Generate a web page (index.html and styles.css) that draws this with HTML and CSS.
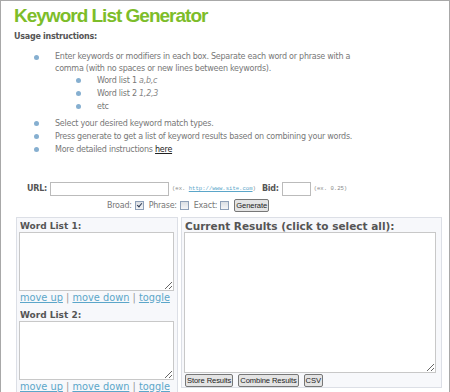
FILE: index.html
```html
<!DOCTYPE html>
<html lang="en">
<head>
    <meta charset="UTF-8">
    <title>Keyword List Generator</title>
    <link rel="stylesheet" href="styles.css">
</head>
<body>
<div class="page">
    <h1>Keyword List Generator</h1>
    <p class="usage">Usage instructions:</p>
    <ul class="steps">
        <li class="first">Enter keywords or modifiers in each box. Separate each word or phrase with a comma (with no spaces or new lines between keywords).
            <ul class="sub">
                <li>Word list 1 <i>a,b,c</i></li>
                <li>Word list 2 <i>1,2,3</i></li>
                <li>etc</li>
            </ul>
        </li>
        <li>Select your desired keyword match types.</li>
        <li>Press generate to get a list of keyword results based on combining your words.</li>
        <li>More detailed instructions <a href="#" class="dark">here</a></li>
    </ul>

    <form class="opts">
        <div class="row">
            <b>URL:</b> <input type="text" class="url">
            <span class="ex">(ex. <a href="#">http://www.site.com</a>)</span>
            <b class="bid-lbl">Bid:</b> <input type="text" class="bid">
            <span class="ex">(ex. 0.25)</span>
        </div>
        <div class="row row2">
            Broad: <input type="checkbox" class="cb" checked>
            Phrase: <input type="checkbox" class="cb">
            Exact: <input type="checkbox" class="cb">
            <button type="button" class="btn">Generate</button>
        </div>
    </form>

    <div class="panels">
        <div class="panel lists">
            <h3>Word List 1:</h3>
            <textarea class="words"></textarea>
            <div class="links"><a href="#">move up</a> | <a href="#">move down</a> | <a href="#">toggle</a></div>
            <h3>Word List 2:</h3>
            <textarea class="words"></textarea>
            <div class="links"><a href="#">move up</a> | <a href="#">move down</a> | <a href="#">toggle</a></div>
        </div>
        <div class="panel results">
            <h3 class="big">Current Results (click to select all):</h3>
            <textarea class="out"></textarea>
            <div class="btns">
                <button type="button" class="btn">Store Results</button>
                <button type="button" class="btn">Combine Results</button>
                <button type="button" class="btn">CSV</button>
            </div>
        </div>
    </div>
</div>
</body>
</html>
```

FILE: styles.css
```css
html, body {
    margin: 0;
    height: 100%;
    overflow: hidden;
    background-color: #fff;
}
.page {
    box-sizing: border-box;
    height: 100%;
    border: 1px solid #a8a8a8;
    border-bottom: none;
    padding: 0 0 0 13px;
    font-family: "DejaVu Sans", Verdana, sans-serif;
    font-size: 8px;
    letter-spacing: -0.25px;
    color: #777;
}
h1 {
    margin: 0;
    padding-top: 3px;
    font-family: "Liberation Sans", Arial, sans-serif;
    font-size: 19px;
    letter-spacing: -1px;
    line-height: 24px;
    color: #7dbd2a;
}
.usage {
    margin: 3px 0 0;
    font-weight: bold;
    color: #555;
    line-height: 12px;
}
.steps {
    list-style: none;
    margin: 8px 0 0;
    padding: 0 0 0 41px;
    width: 305px;
}
.steps li {
    position: relative;
    line-height: 13px;
}
.steps li.first {
    line-height: 12px;
}
.steps li::before {
    content: "";
    position: absolute;
    left: -21px;
    top: 4px;
    width: 5px;
    height: 5px;
    border-radius: 50%;
    background-color: #86afd0;
}
.sub {
    list-style: none;
    margin: -1.5px 0 4px;
    padding: 0 0 0 42px;
}
.steps .sub li {
    line-height: 13px;
}
.sub i {
    color: #888;
}
a {
    color: #5ba6c9;
}
a.dark {
    color: #222;
}
.opts {
    margin: 25px 0 0;
}
.row {
    display: flex;
    align-items: center;
    height: 16px;
    padding-left: 13px;
}
.row b {
    color: #555;
    margin-right: 3px;
}
.url {
    width: 115px;
    height: 10px;
    border: 1px solid #bbb;
    margin: 0 3px 0 0;
    padding: 1px;
}
.bid {
    width: 25px;
    height: 10px;
    border: 1px solid #bbb;
    margin: 0 3px 0 0;
    padding: 1px;
}
.bid-lbl {
    margin-left: 6px;
}
.ex {
    font-family: "Liberation Mono", "Courier New", monospace;
    font-size: 5.6px;
    letter-spacing: 0;
    color: #888;
}
.row2 {
    padding-left: 93px;
    margin-top: 1px;
}
.cb {
    appearance: none;
    -webkit-appearance: none;
    position: relative;
    box-sizing: border-box;
    width: 9px;
    height: 9px;
    margin: 0 5px 0 3px;
    border: 1px solid #8fa0b8;
    background: linear-gradient(#dcdfe4, #f4f5f7);
}
.cb:checked::after {
    content: "";
    position: absolute;
    left: 2px;
    top: 0;
    width: 2px;
    height: 4px;
    border: solid #2c3a55;
    border-width: 0 1px 1px 0;
    transform: rotate(40deg);
}
.btn {
    font-family: "Liberation Sans", Arial, sans-serif;
    font-size: 7.6px;
    letter-spacing: -0.1px;
    color: #222;
    background-color: #e4e4e4;
    border: 1px solid #777;
    border-radius: 2px;
    padding: 0 1px;
    height: 13px;
    line-height: 11px;
}
.panels {
    display: flex;
    align-items: flex-start;
    gap: 3px;
    margin: 3px 0 0 2px;
}
.panel {
    border: 1px solid #dcdfe6;
    background-color: #f7f8fb;
    padding: 2px 3px 2px 2px;
}
.lists {
    width: 155px;
    height: 200px;
}
.results {
    width: 252px;
    height: 165px;
    padding-right: 5px;
}
h3 {
    margin: 0 0 0 1px;
    height: 12px;
    overflow: hidden;
    font-size: 9px;
    letter-spacing: 0;
    line-height: 12px;
    color: #555;
}
h3.big {
    font-size: 10.5px;
}
textarea {
    display: block;
    box-sizing: border-box;
    border: 1px solid #c8c8c8;
    background-color: #fff;
    margin: 0;
    padding: 0;
}
.words {
    width: 155px;
    height: 59px;
}
.out {
    width: 252px;
    height: 141px;
    overflow-y: scroll;
}
.links {
    font-size: 9.8px;
    letter-spacing: 0;
    line-height: 13px;
    color: #999;
    margin: 0 0 5px 1px;
}
.btns {
    display: flex;
    gap: 5px;
    margin: 1px 0 0 1px;
}
```
